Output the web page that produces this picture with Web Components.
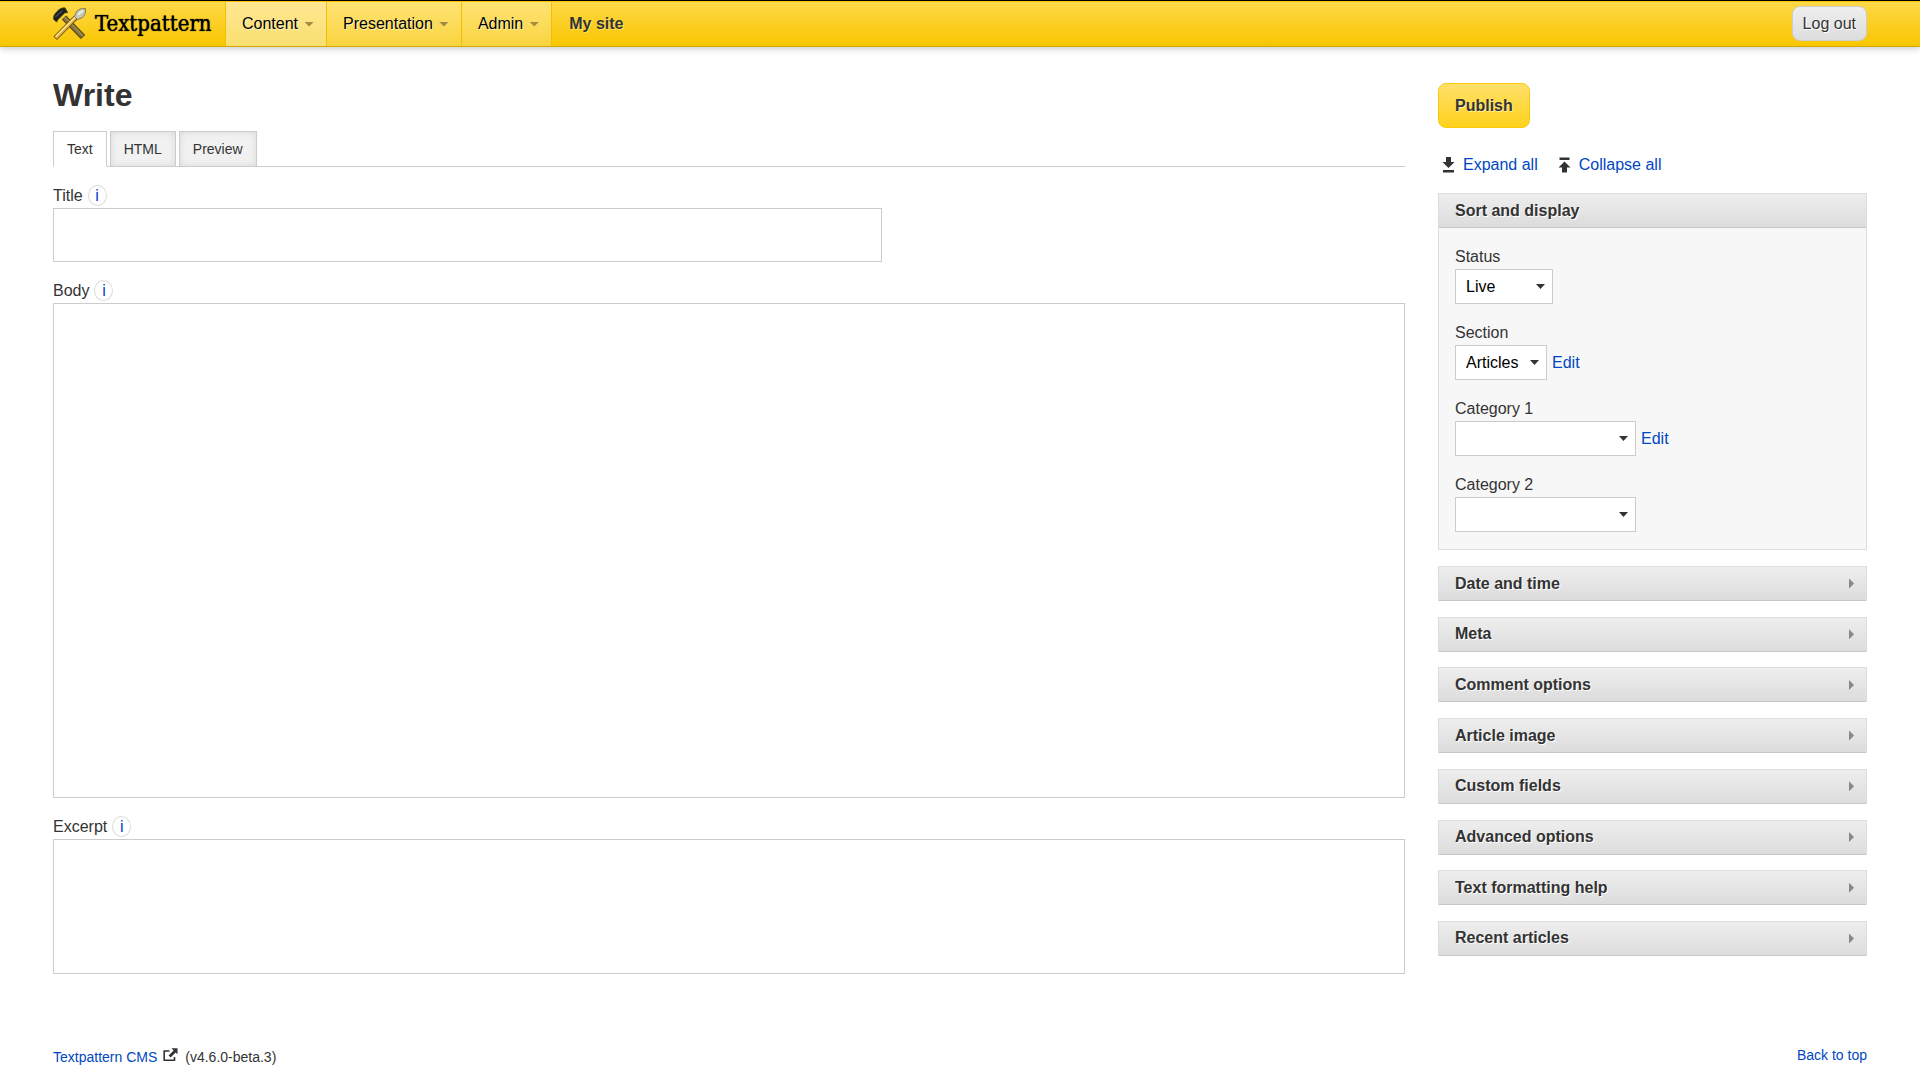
<!DOCTYPE html>
<html lang="en">
<head>
<meta charset="utf-8">
<title>Write | My site | Textpattern CMS</title>
<style>
  html { background: #fff; }
  body {
    margin: 0;
    --gutter: 53px;
    --ink: #333;
    --link: #0047c2;
    --line: #ccc;
    font: 16px/24px "Liberation Sans", Arial, sans-serif;
    color: var(--ink);
  }
</style>
</head>
<body>
<txp-page></txp-page>

<template id="t-page">
  <style>
    :host { display: block; }
    .columns { display: flex; gap: 33px; padding: 0 var(--gutter); }
    main { flex: 1352 1 0; min-width: 0; padding-top: 28px; }
    aside { flex: 429 1 0; min-width: 0; padding: 36px 0 18px; display: flex; flex-direction: column; box-sizing: border-box; }
    h1 { margin: 0 0 16px; font-size: 32px; line-height: 40px; }
    .fields { display: flex; flex-direction: column; gap: 18px; padding-top: 18px; }
    .publish {
      align-self: flex-start; height: 45px; padding: 0 16px; border: 1px solid #f9c90c; border-radius: 8px;
      background: linear-gradient(#ffe06a, #ffd21c); font: bold 16px/24px "Liberation Sans", Arial, sans-serif;
      color: var(--ink); text-shadow: 1px 1px 0 #ffeda6;
    }
    .toggles { display: flex; gap: 20px; padding: 25px 4px 16px; }
    .toggles a { display: flex; align-items: center; gap: 8px; color: var(--link); text-decoration: none; }
    .toggles svg { width: 13px; height: 16px; fill: #333; }
    .selects { display: flex; flex-direction: column; gap: 17px; }
    .stack { flex: 1; display: flex; flex-direction: column; justify-content: space-between; padding-top: 16px; }
  </style>
  <txp-header></txp-header>
  <div class="columns">
    <main>
      <h1>Write</h1>
      <txp-tabs></txp-tabs>
      <div class="fields">
        <txp-field label="Title" kind="input"></txp-field>
        <txp-field label="Body" height="495"></txp-field>
        <txp-field label="Excerpt" height="135"></txp-field>
      </div>
    </main>
    <aside>
      <button class="publish" type="button">Publish</button>
      <div class="toggles">
        <a href="#expand"><svg viewBox="0 0 13 16"><path d="M4 0h5v5h3.500L6.500 11 .5 5H4zM1 13h11v2.500H1z"/></svg>Expand all</a>
        <a href="#collapse"><svg viewBox="0 0 13 16"><path d="M1.500 .5h10V3h-10zM6.500 4.500l6 6H9v5H4v-5H.5z"/></svg>Collapse all</a>
      </div>
      <txp-panel heading="Sort and display" open>
        <div class="selects">
          <txp-select label="Status" options="Live,Draft,Hidden,Pending,Sticky" width="98"></txp-select>
          <txp-select label="Section" options="Articles" width="92" edit></txp-select>
          <txp-select label="Category 1" width="181" edit></txp-select>
          <txp-select label="Category 2" width="181"></txp-select>
        </div>
      </txp-panel>
      <div class="stack">
        <txp-panel heading="Date and time"></txp-panel>
        <txp-panel heading="Meta"></txp-panel>
        <txp-panel heading="Comment options"></txp-panel>
        <txp-panel heading="Article image"></txp-panel>
        <txp-panel heading="Custom fields"></txp-panel>
        <txp-panel heading="Advanced options"></txp-panel>
        <txp-panel heading="Text formatting help"></txp-panel>
        <txp-panel heading="Recent articles"></txp-panel>
      </div>
    </aside>
  </div>
  <txp-footer></txp-footer>
</template>

<template id="t-header">
  <style>
    :host { display: block; }
    header {
      display: flex; align-items: stretch; height: 47px; box-sizing: border-box; padding: 0 var(--gutter);
      border-top: 1px solid #000; border-bottom: 1px solid #d9a900;
      background: linear-gradient(#ffd949, #f8c600); box-shadow: inset 0 1px 0 #f8c400, 0 2px 6px rgba(0,0,0,.2);
      color: #000;
    }
    a { color: inherit; text-decoration: none; }
    .brand { display: flex; align-items: center; gap: 9px; padding-right: 12px; font: 22px/30px "DejaVu Serif Condensed", "DejaVu Serif", serif; color: #000; text-shadow: 0 0 1px #000; }
    .brand svg { width: 33px; height: 34px; }
    .brand span { min-width: 118px; }
    nav { display: flex; border-left: 1px solid #f3c000; }
    .menu { display: flex; align-items: center; gap: 6px; padding: 0 12px 0 16px; border-right: 1px solid #f3c000; margin-top: 1px; background: linear-gradient(#ffe373, #f9d440); text-shadow: 1px 1px 0 #fff1b5; }
    .menu[aria-current] { background: linear-gradient(#ffe793, #fadf70); }
    .menu::after { content: ""; width: 10px; height: 5px; background: #a08c44; clip-path: polygon(0 0, 100% 0, 50% 100%); }
    .site { display: flex; align-items: center; padding: 0 17px; font-weight: bold; color: var(--ink); text-shadow: 1px 1px 0 #ffe36c; }
    button {
      margin: 5px 0 0 auto; height: 35px; padding: 0 10px; border: 1px solid #ccc; border-radius: 8px;
      background: linear-gradient(#eee, #ddd); font: 16px/24px "Liberation Sans", Arial, sans-serif; color: var(--ink);
      text-shadow: 1px 1px 0 #fff;
    }
  </style>
  <header>
    <a class="brand" href="#home">
      <svg viewBox="0 0 33 34" fill="none" aria-hidden="true">
        <path d="M11 10.500L30 30" stroke="#4a3c10" stroke-width="6"/>
        <path d="M11 10.500L29.500 29.500" stroke="#82713a" stroke-width="4"/>
        <path d="M12 10.500L30 28.800" stroke="#a89450" stroke-width="1.200"/>
        <path d="M.6 10.500c0-2 2-5 5-7.500 2-1.700 5-2.500 6.500-2l2.500 4.500-3 .5L4.500 13l-.8 2-3-2.500z" fill="#191b1c" stroke="#514715"/>
        <path d="M2.500 10l7-6.500" stroke="#4b5154" stroke-width="1.500"/>
        <path d="M2.200 31.200L23 10.200" stroke="#6b5010" stroke-width="5"/>
        <path d="M2.700 30.700L22.800 10.400" stroke="#dfb143" stroke-width="3.400"/>
        <path d="M2.700 29.800L22 10.300" stroke="#ffe79a" stroke-width="1.300"/>
        <path d="M21.500 9.500l2-5L27 2l5.500-.5-.2 5-2.800 4-5 2z" fill="#c9c9bd" stroke="#857947"/>
        <path d="M25 7.500l5-4" stroke="#efeee4" stroke-width="2"/>
      </svg>
      <span>Textpattern</span>
    </a>
    <nav aria-label="Main">
      <a class="menu" href="#content" aria-current="page">Content</a>
      <a class="menu" href="#presentation">Presentation</a>
      <a class="menu" href="#admin">Admin</a>
      <a class="site" href="#site">My site</a>
    </nav>
    <button type="button">Log out</button>
  </header>
</template>

<template id="t-tabs">
  <style>
    :host { display: block; }
    div { display: flex; gap: 3px; box-shadow: inset 0 -1px 0 var(--line); }
    button {
      height: 36px; padding: 0 13px; border: 1px solid var(--line); background: #f1f1f1;
      box-shadow: inset 0 0 7px rgba(0,0,0,.1); font: 14px/20px "Liberation Sans", Arial, sans-serif; color: var(--ink);
    }
    button[aria-selected="true"] { background: #fff; box-shadow: none; border-bottom-color: #fff; }
  </style>
  <div role="tablist">
    <button type="button" role="tab" aria-selected="true">Text</button>
    <button type="button" role="tab" aria-selected="false">HTML</button>
    <button type="button" role="tab" aria-selected="false">Preview</button>
  </div>
</template>

<template id="t-field">
  <style>
    :host { display: flex; flex-direction: column; gap: 2px; }
    .head { display: flex; gap: 5px; line-height: 21px; }
    .head a { box-sizing: border-box; width: 19px; height: 21px; border: 1px solid #ddd; border-radius: 50%; line-height: 19px; text-align: center; color: var(--link); text-decoration: none; }
    input, textarea { box-sizing: border-box; width: 100%; margin: 0; padding: 8px; border: 1px solid var(--line); border-radius: 0; background: #fff; font: 16px/24px "Liberation Sans", Arial, sans-serif; color: var(--ink); }
    input { height: 54px; max-width: 829px; }
    textarea { display: block; resize: none; }
  </style>
  <div class="head"><label for="control"></label><a href="#help">i</a></div>
</template>

<template id="t-select">
  <style>
    :host { display: block; }
    label { display: block; }
    .row { display: flex; align-items: center; gap: 5px; }
    .box { display: grid; align-items: center; }
    .box::after { content: ""; grid-area: 1 / 1; justify-self: end; margin-right: 8px; width: 9px; height: 5px; background: #333; clip-path: polygon(0 0, 100% 0, 50% 100%); pointer-events: none; }
    select { grid-area: 1 / 1; appearance: none; box-sizing: border-box; height: 35px; margin: 0; padding: 0 10px; border: 1px solid var(--line); border-radius: 0; background: #fff; font: 16px/24px "Liberation Sans", Arial, sans-serif; color: #000; }
    a { color: var(--link); text-decoration: none; }
  </style>
  <label for="control"></label>
  <div class="row"><span class="box"><select id="control"></select></span></div>
</template>

<template id="t-panel">
  <style>
    :host { display: block; }
    details { border: 1px solid #ddd; background: #f7f7f7; }
    summary {
      display: flex; align-items: center; justify-content: space-between; list-style: none;
      height: 34px; box-sizing: border-box; padding: 0 12px 0 16px; margin-bottom: -1px; border-bottom: 1px solid #c6c6c6;
      background: linear-gradient(#eee, #dcdcdc); font-weight: bold; text-shadow: 1px 1px 0 #fff; cursor: pointer;
    }
    details[open] summary { margin-bottom: 0; }
    summary::after { content: ""; width: 5px; height: 10px; background: #888; clip-path: polygon(0 0, 100% 50%, 0 100%); }
    details[open] summary::after { display: none; }
    .body { padding: 17px 16px; }
  </style>
  <details><summary><span></span></summary><div class="body"><slot></slot></div></details>
</template>

<template id="t-footer">
  <style>
    :host { display: block; padding: 71px var(--gutter) 11px; font-size: 14px; }
    footer { display: flex; justify-content: space-between; align-items: flex-start; }
    a { color: var(--link); text-decoration: none; }
    .about { display: flex; align-items: center; }
    svg { width: 15px; height: 14px; margin: 0 7px 4px 6px; }
    .top { line-height: 20px; }
  </style>
  <footer>
    <div class="about">
      <a href="#textpattern">Textpattern CMS</a>
      <svg viewBox="0 0 15 14" aria-hidden="true"><path d="M6.500 3H1.200v9.300h10.300V9" fill="none" stroke="#333" stroke-width="1.600"/><path d="M8.500 .3h6v6l-1.900-1.900-5 5-2-2 5-5z" fill="#333"/></svg>
      <span>(v4.6.0-beta.3)</span>
    </div>
    <a class="top" href="#top">Back to top</a>
  </footer>
</template>

<script>
  class TxpElement extends HTMLElement {
    constructor() {
      super();
      this.attachShadow({ mode: "open" });
    }
    connectedCallback() {
      if (this.shadowRoot.childNodes.length) return;
      const name = this.localName.replace("txp-", "t-");
      this.shadowRoot.append(document.getElementById(name).content.cloneNode(true));
      this.setup(this.shadowRoot);
    }
    setup() {}
  }

  class TxpHeader extends TxpElement {}
  class TxpFooter extends TxpElement {}
  class TxpPage extends TxpElement {}

  class TxpTabs extends TxpElement {
    setup(root) {
      const tabs = [...root.querySelectorAll("button")];
      tabs.forEach(tab => tab.addEventListener("click", () => {
        tabs.forEach(other => other.setAttribute("aria-selected", String(other === tab)));
      }));
    }
  }

  class TxpField extends TxpElement {
    setup(root) {
      const label = this.getAttribute("label");
      root.querySelector("label").textContent = label;
      root.querySelector("a").setAttribute("aria-label", "Help: " + label);
      const control = document.createElement(this.getAttribute("kind") || "textarea");
      control.id = "control";
      if (this.hasAttribute("height")) control.style.height = this.getAttribute("height") + "px";
      root.append(control);
    }
  }

  class TxpSelect extends TxpElement {
    setup(root) {
      root.querySelector("label").textContent = this.getAttribute("label");
      const select = root.querySelector("select");
      select.style.width = this.getAttribute("width") + "px";
      (this.getAttribute("options") || "").split(",").forEach(text => select.add(new Option(text)));
      if (this.hasAttribute("edit")) {
        const link = document.createElement("a");
        link.href = "#edit";
        link.textContent = "Edit";
        root.querySelector(".row").append(link);
      }
    }
  }

  class TxpPanel extends TxpElement {
    setup(root) {
      root.querySelector("span").textContent = this.getAttribute("heading");
      root.querySelector("details").open = this.hasAttribute("open");
    }
  }

  customElements.define("txp-header", TxpHeader);
  customElements.define("txp-tabs", TxpTabs);
  customElements.define("txp-field", TxpField);
  customElements.define("txp-select", TxpSelect);
  customElements.define("txp-panel", TxpPanel);
  customElements.define("txp-footer", TxpFooter);
  customElements.define("txp-page", TxpPage);
</script>
</body>
</html>
